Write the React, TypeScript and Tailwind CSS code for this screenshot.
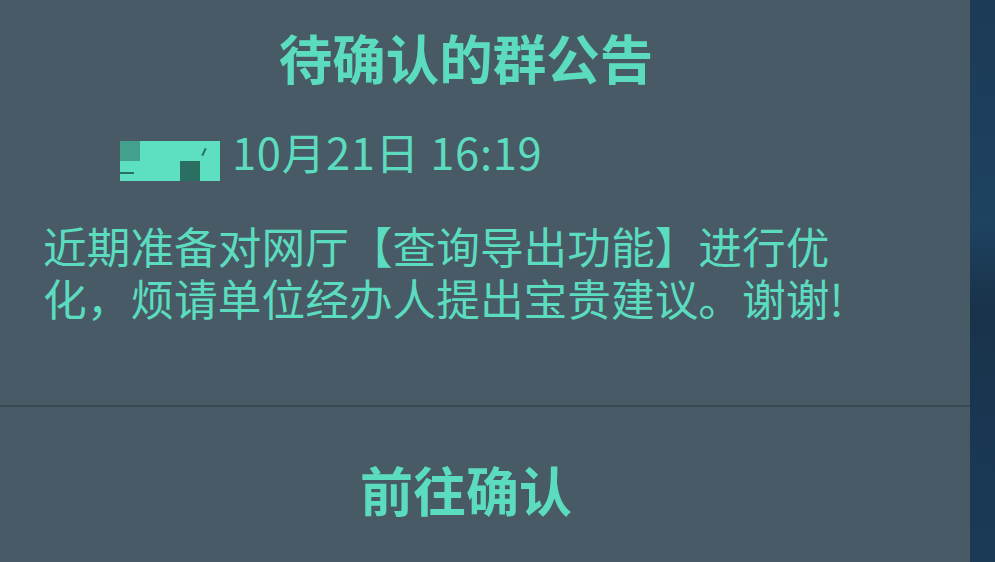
import React from "react";

export default function App() {
  const font = { fontFamily: '"Noto Sans CJK SC", "Noto Sans", sans-serif' };
  return (
    <div className="flex h-[562px] w-[995px] overflow-hidden" style={font}>
      <div className="flex w-[970px] flex-col bg-[#475a66] text-[#5cdcbf]">
        <div className="flex h-[405px] flex-col">
          <div className="w-[932px] pt-[30px] text-center text-[53.5px] font-bold leading-none">
            待确认的群公告
          </div>
          <div className="mt-[46px] flex items-start pl-[120px]">
            <div className="relative mt-[11px] h-[40px] w-[100px] bg-[#5ddfc1]">
              <div className="absolute left-0 top-0 h-[20px] w-[20px] bg-[#43a08c]" />
              <div className="absolute left-[60px] top-[20px] h-[20px] w-[20px] bg-[#2b6f63]" />
              <div className="absolute left-0 top-[31px] h-[2px] w-[14px] bg-[#2b6f63]" />
              <div className="absolute left-[83px] top-[7px] h-[8px] w-[2px] rotate-[25deg] bg-[#2b6f63]" />
            </div>
            <div className="ml-[12px] text-[43.5px] leading-none tracking-[0.7px]">10月21日 16:19</div>
          </div>
          <div className="mt-[38px] pl-[43px] text-[43.7px] font-normal leading-[52px]">
            <div>近期准备对网厅【查询导出功能】进行优</div>
            <div>化，烦请单位经办人提出宝贵建议。谢谢!</div>
          </div>
        </div>
        <div className="h-[2px] bg-[#3a4b56]" />
        <div className="flex w-[932px] flex-1 items-center justify-center pt-[9px] text-[53px] font-bold leading-none">
          前往确认
        </div>
      </div>
      <div className="w-[25px] bg-[linear-gradient(180deg,#1c3b56_0%,#1e4260_40%,#183249_55%,#193752_75%,#1b3a56_100%)]" />
    </div>
  );
}
